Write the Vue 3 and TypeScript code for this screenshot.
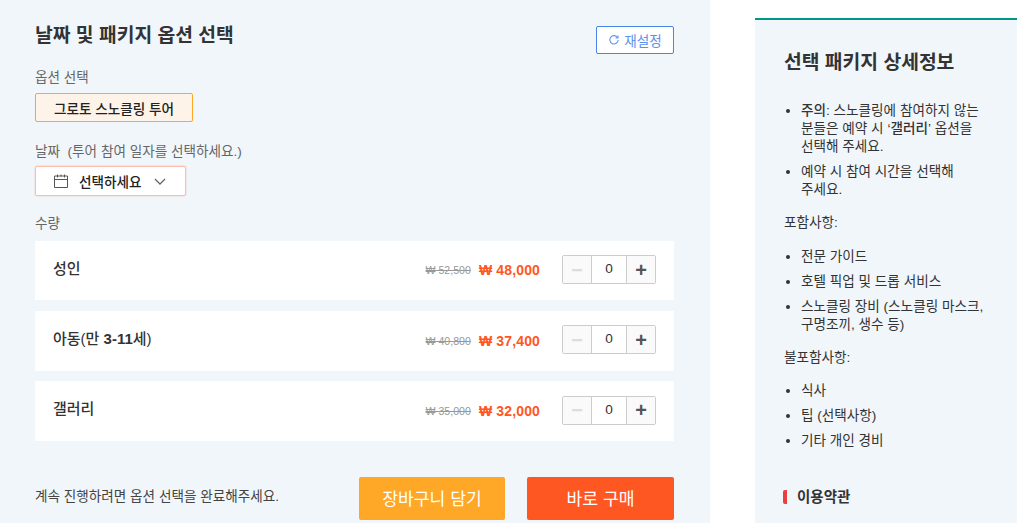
<script setup lang="ts">
interface Item { name: string; pre: string; num: string; post: string; was: string; now: string }
const items: Item[] = [
  { name: 'a', pre: '성인', num: '', post: '', was: '₩ 52,500', now: '48,000' },
  { name: 'b', pre: '아동(만 ', num: '3-11', post: '세)', was: '₩ 40,800', now: '37,400' },
  { name: 'c', pre: '갤러리', num: '', post: '', was: '₩ 35,000', now: '32,000' },
]
</script>

<template>
  <div class="page">
    <section class="left">
      <div class="head">
        <h2 class="title">날짜 및 패키지 옵션 선택</h2>
        <button class="reset">
          <svg width="10" height="10" viewBox="0 0 12 12" fill="none" stroke="#5b93ea" stroke-width="1.3">
            <path d="M10.3 3.2A5 5 0 1 0 11 6" />
            <path d="M10.8 .6v3H7.8" />
          </svg>
          재설정
        </button>
      </div>
      <div class="label opt-label">옵션 선택</div>
      <button class="option">그로토 스노클링 투어</button>
      <div class="label date-label">날짜&nbsp; (투어 참여 일자를 선택하세요.)</div>
      <button class="select">
        <svg width="16" height="16" viewBox="0 0 16 16" fill="none" stroke="#555" stroke-width="1">
          <path d="M1.5 3h13v11.5h-13zM1.5 6.5h13M4.5 1.5v3M8 1.5v2M11.5 1.5v3" />
        </svg>
        <span class="select-text">선택하세요</span>
        <svg width="12" height="7" viewBox="0 0 12 7" fill="none" stroke="#666" stroke-width="1.3">
          <path d="M1 1l5 5 5-5" />
        </svg>
      </button>
      <div class="label qty-label">수량</div>
      <div class="rows">
        <div v-for="it in items" :key="it.name" class="row">
          <span class="name">{{ it.pre }}<b>{{ it.num }}</b>{{ it.post }}</span>
          <span class="was">{{ it.was }}</span>
          <span class="now">₩ {{ it.now }}</span>
          <div class="stepper">
            <button class="step off">−</button>
            <span class="count">0</span>
            <button class="step">+</button>
          </div>
        </div>
      </div>
      <div class="foot">
        <span class="hint">계속 진행하려면 옵션 선택을 완료해주세요.</span>
        <button class="cta cart">장바구니 담기</button>
        <button class="cta buy">바로 구매</button>
      </div>
    </section>
    <aside class="right">
      <h3 class="side-title">선택 패키지 상세정보</h3>
      <ul class="first">
        <li><b class="med">주의</b>: 스노클링에 참여하지 않는 분들은 예약 시 <b class="med">‘갤러리’</b> 옵션을 선택해 주세요.</li>
        <li>예약 시 참여 시간을 선택해 주세요.</li>
      </ul>
      <p class="p1">포함사항:</p>
      <ul>
        <li>전문 가이드</li>
        <li>호텔 픽업 및 드롭 서비스</li>
        <li>스노클링 장비 (스노클링 마스크, 구명조끼, 생수 등)</li>
      </ul>
      <p>불포함사항:</p>
      <ul class="last">
        <li>식사</li>
        <li>팁 (선택사항)</li>
        <li>기타 개인 경비</li>
      </ul>
      <h4 class="terms">이용약관</h4>
    </aside>
  </div>
</template>

<style>
html, body { margin: 0; background: #fff; overflow: hidden; }
</style>

<style scoped>
* { box-sizing: border-box; }
button { font-family: inherit; cursor: pointer; }
.page {
  width: 1017px; height: 523px; overflow: hidden; display: flex; align-items: flex-start;
  font-family: "Liberation Sans", "Noto Sans CJK KR", sans-serif; color: #333;
}
.left { width: 710px; height: 523px; flex: none; background: #f1f6fb; padding: 0 36px 0 35px; }
.head { display: flex; justify-content: space-between; align-items: flex-start; height: 66px; }
.title { margin: 24px 0 0; font-size: 19.3px; line-height: 24px; font-weight: 700; color: #333; }
.reset {
  margin-top: 26px; width: 78px; height: 28px; padding: 0 0 0 1px; background: #fff; border: 1px solid #4a86e8; border-radius: 2px;
  color: #5b93ea; font-size: 13.6px; display: flex; align-items: center; justify-content: center; gap: 5px;
}
.label { font-size: 13.6px; line-height: 20px; color: #666; }
.opt-label { margin-top: 2px; }
.option {
  display: block; margin-top: 5px; width: 158px; height: 29px; padding: 0; background: #fdf3e9;
  border: 1px solid #ffa726; border-radius: 2px; font-size: 13.6px; font-weight: 500; color: #222;
}
.date-label { margin-top: 20px; }
.select {
  margin-top: 4px; width: 151px; height: 30px; padding: 0 0 0 17px; display: flex; align-items: center;
  background: #fff; border: 1px solid #fbbfa9; border-radius: 2px; box-shadow: 0 0 2px rgba(255, 100, 60, .35);
}
.select-text { margin: 0 12px 0 10px; font-size: 13.6px; font-weight: 500; color: #222; }
.qty-label { margin-top: 18px; }
.rows { margin-top: 6.5px; display: flex; flex-direction: column; gap: 10.2px; }
.row { height: 59.95px; background: #fff; display: flex; align-items: center; padding: 0 18px; }
.name { font-size: 15px; font-weight: 500; margin-right: auto; margin-top: -6px; color: #333; }
.name b { font-weight: 700; }
.was { font-size: 10.6px; color: #999; text-decoration: line-through; margin-right: 8px; }
.now { font-size: 14px; letter-spacing: .15px; font-weight: 700; color: #ff5722; margin-right: 22px; }
.stepper { display: flex; height: 29px; border: 1px solid #ccc; border-radius: 2px; width: 94px; margin-top: -1.35px; }
.step { width: 28px; padding: 0; border: 0; background: #fafafa; color: #555; font-size: 20px; font-weight: 700; line-height: 1; }
.step.off { color: #ddd; }
.count { flex: 1; background: #fff; border: solid #ccc; border-width: 0 1px; text-align: center; font-size: 13.6px; line-height: 26px; color: #333; }
.foot { display: flex; align-items: center; margin-top: 36.25px; }
.hint { font-size: 13.6px; color: #444; margin-right: auto; margin-top: -6px; }
.cta { height: 43px; border: 0; border-radius: 2px; color: #fff; font-size: 17.2px; padding: 0 0 2px; }
.cart { width: 146px; background: #ffa726; margin-right: 22px; }
.buy { width: 147px; background: #ff5722; }
.right {
  margin-top: 18px; margin-left: 45px; width: 262px; height: 505px; flex: none; background: #f1f6fb;
  border-top: 2px solid #009688; padding: 0 29px; font-size: 13.6px; line-height: 18px; color: #333; word-break: keep-all;
}
.side-title { margin: 31px 0 0; font-size: 19.3px; line-height: 24px; font-weight: 700; color: #333; }
ul { margin: 16px 0 0; padding: 0 0 0 17px; }
ul.first { margin-top: 27px; }
ul.last { margin-top: 15px; }
li { margin-bottom: 7px; }
p { margin: 15px 0 0; }
.med { font-weight: 500; }
.terms {
  margin: 40px 0 0 -1px; padding-left: 10px; border-left: 4px solid #e8403f; font-size: 14.5px; line-height: 14px;
  font-weight: 700; color: #333; border-radius: 2px;
}
</style>
